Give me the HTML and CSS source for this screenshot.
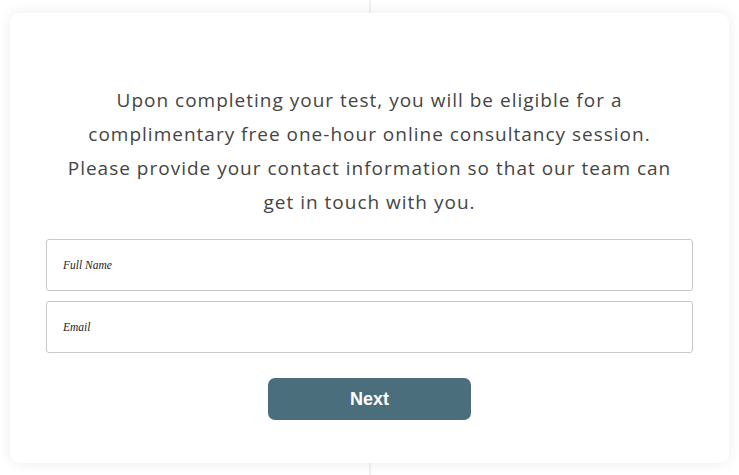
FILE: index.html
```html
<!DOCTYPE html>
<html>
<head>
<meta charset="utf-8">
<link rel="stylesheet" href="styles.css">
</head>
<body>
<div class="divider"></div>
<main class="card">
  <p class="intro">Upon completing your test, you will be eligible for a<br>complimentary free one-hour online consultancy session.<br>Please provide your contact information so that our team can<br>get in touch with you.</p>
  <form class="form">
    <input class="field" type="text" placeholder="Full Name">
    <input class="field" type="email" placeholder="Email">
    <div class="actions"><button type="button" class="next">Next</button></div>
  </form>
</main>
</body>
</html>
```
FILE: styles.css
```css
html, body {
  margin: 0;
  padding: 0;
  background: #ffffff;
  width: 739px;
  height: 475px;
  overflow: hidden;
}
body {
  position: relative;
  padding: 13px 10px 0 10px;
  box-sizing: border-box;
}
.divider {
  position: absolute;
  left: 369px;
  top: 0;
  width: 2px;
  height: 475px;
  background: #f1f1f1;
}
.card {
  position: relative;
  background: #fff;
  border-radius: 10px;
  box-shadow: 0 0 14px rgba(0,0,0,0.08);
  height: 450px;
  box-sizing: border-box;
  padding: 70px 36px 0 36px;
}
.intro {
  margin: 0 auto;
  text-align: center;
  font-family: "Open Sans", sans-serif;
  font-size: 19px;
  line-height: 34px;
  color: #454545;
  letter-spacing: 1px;
  white-space: nowrap;
}
.form {
  margin-top: 20px;
  display: flex;
  flex-direction: column;
  gap: 10px;
}
.field {
  height: 52px;
  box-sizing: border-box;
  border: 1px solid #c9c9c9;
  border-radius: 3px;
  padding: 0 16px;
  font-family: "Liberation Serif", serif;
  font-style: italic;
  font-size: 11.5px;
  color: #222;
  outline: none;
}
.field::placeholder {
  color: #222;
  opacity: 1;
}
.actions {
  display: flex;
  justify-content: center;
  margin-top: 15px;
}
.next {
  width: 203px;
  height: 42px;
  border: none;
  border-radius: 7px;
  background: #4b6e7d;
  color: #fff;
  font-family: "Liberation Sans", Arial, sans-serif;
  font-weight: bold;
  font-size: 18px;
  cursor: pointer;
}
```
